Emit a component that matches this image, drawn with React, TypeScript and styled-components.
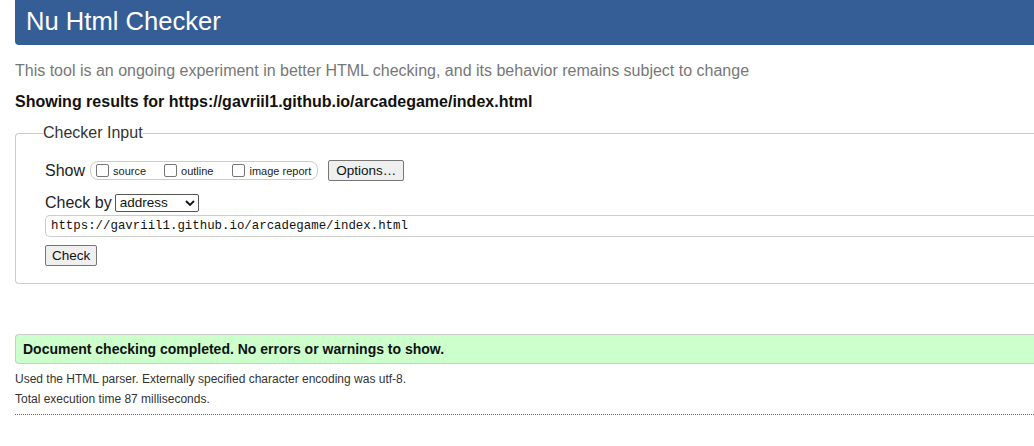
import React from "react";
import styled, { createGlobalStyle } from "styled-components";

const Global = createGlobalStyle`
  html, body { margin: 0; padding: 0; background: #fff; overflow: hidden; }
  body { font-family: "Liberation Sans", Arial, sans-serif; color: #222; }
`;

const Page = styled.div`
  width: 100%;
  box-sizing: border-box;
  padding-left: 15px;
`;

const Header = styled.h1`
  margin: 0;
  height: 45px;
  box-sizing: border-box;
  padding: 7px 11px 0;
  background: #365e96;
  color: #fff;
  font-size: 25.6px;
  line-height: 29px;
  font-weight: normal;
  border-radius: 0 0 0 4px;
`;

const Tagline = styled.p`
  margin: 17px 0 0;
  font-size: 16px;
  line-height: 18px;
  color: #777;
`;

const Results = styled.p`
  margin: 13px 0 0;
  font-size: 16px;
  line-height: 18px;
  font-weight: bold;
  color: #111;
`;

const Fieldset = styled.fieldset`
  margin: 13px 0 0;
  padding: 18px 0 17px 29px;
  border: 1px solid #ccc;
  border-right: 0;
  border-radius: 4px 0 0 4px;
  display: flex;
  flex-direction: column;
`;

const Legend = styled.legend`
  padding: 0;
  margin-left: -2px;
  font-size: 16px;
  line-height: 18px;
  color: #333;
`;

const Row = styled.div<{ $mt?: number }>`
  display: flex;
  align-items: center;
  margin-top: ${(p) => p.$mt ?? 0}px;
`;

const Label = styled.span<{ $gap: number }>`
  font-size: 16px;
  line-height: 18px;
  color: #222;
  margin-right: ${(p) => p.$gap}px;
`;

const Group = styled.div`
  display: flex;
  align-items: center;
  height: 19px;
  box-sizing: border-box;
  border: 1px solid #ccc;
  border-radius: 8px;
  padding: 0 6px 0 5px;
`;

const Option = styled.label<{ $mr: number }>`
  display: flex;
  align-items: center;
  font-size: 11px;
  line-height: 13px;
  color: #222;
  margin-right: ${(p) => p.$mr}px;
  padding-top: 2px;
`;

const Box = styled.input`
  appearance: none;
  width: 13px;
  height: 13px;
  margin: -2px 4px 0 0;
  border: 1px solid #767676;
  border-radius: 2px;
  background: #fff;
  box-sizing: border-box;
`;

const Button = styled.button<{ $ml?: number; $px?: number }>`
  height: 21px;
  padding: 0 ${(p) => p.$px ?? 6}px;
  margin-left: ${(p) => p.$ml ?? 0}px;
  font-family: "Liberation Sans", Arial, sans-serif;
  font-size: 13.5px;
  color: #111;
  background: #efefef;
  border: 1px solid #767676;
  border-radius: 2px;
`;

const SelectWrap = styled.span`
  position: relative;
  display: inline-flex;
`;

const Select = styled.select`
  appearance: none;
  width: 84px;
  height: 18px;
  box-sizing: border-box;
  padding: 0 0 0 4px;
  font-family: "Liberation Sans", Arial, sans-serif;
  font-size: 13.5px;
  line-height: 16px;
  color: #111;
  background: #fff;
  border: 1px solid #555;
  border-radius: 2px;
`;

const Chevron = styled.svg`
  position: absolute;
  right: 4px;
  top: 6px;
  pointer-events: none;
`;

const UrlInput = styled.input`
  display: block;
  width: 100%;
  height: 22px;
  box-sizing: border-box;
  margin-top: 3px;
  padding: 0 5px;
  font-family: "Liberation Mono", "Courier New", monospace;
  font-size: 12.4px;
  color: #111;
  border: 1px solid #ccc;
  border-right: 0;
  border-radius: 5px 0 0 5px;
  outline: none;
`;

const Success = styled.div`
  margin-top: 50px;
  height: 30px;
  box-sizing: border-box;
  padding: 0 7px;
  display: flex;
  align-items: center;
  background: #ccffcc;
  border: 1px solid #ccc;
  border-right: 0;
  border-radius: 4px 0 0 4px;
  font-size: 14px;
  font-weight: bold;
  color: #111;
`;

const Note = styled.p<{ $mt: number }>`
  margin: ${(p) => p.$mt}px 0 0;
  font-size: 12px;
  line-height: 14px;
  color: #333;
`;

const Divider = styled.hr`
  margin: 8px 0 0;
  border: 0;
  border-top: 1px dotted #666;
  height: 0;
`;

export default function App() {
  return (
    <Page>
      <Global />
      <Header>Nu Html Checker</Header>
      <Tagline>
        This tool is an ongoing experiment in better HTML checking, and its behavior remains subject to change
      </Tagline>
      <Results>Showing results for https://gavriil1.github.io/arcadegame/index.html</Results>
      <Fieldset>
        <Legend>Checker Input</Legend>
        <Row>
          <Label $gap={5}>Show</Label>
          <Group>
            <Option $mr={18}>
              <Box type="checkbox" />
              source
            </Option>
            <Option $mr={19}>
              <Box type="checkbox" />
              outline
            </Option>
            <Option $mr={0}>
              <Box type="checkbox" />
              image report
            </Option>
          </Group>
          <Button $ml={10} $px={7}>Options…</Button>
        </Row>
        <Row $mt={13}>
          <Label $gap={3}>Check by</Label>
          <SelectWrap>
            <Select defaultValue="address">
              <option value="address">address</option>
              <option value="file">file upload</option>
              <option value="text">text input</option>
            </Select>
            <Chevron width="10" height="6" viewBox="0 0 10 6">
              <path d="M1 1 L5 5 L9 1" fill="none" stroke="#111" strokeWidth="1.8" />
            </Chevron>
          </SelectWrap>
        </Row>
        <UrlInput defaultValue="https://gavriil1.github.io/arcadegame/index.html" />
        <Row $mt={8}>
          <Button>Check</Button>
        </Row>
      </Fieldset>
      <Success>Document checking completed. No errors or warnings to show.</Success>
      <Note $mt={8}>Used the HTML parser. Externally specified character encoding was utf-8.</Note>
      <Note $mt={6}>Total execution time 87 milliseconds.</Note>
      <Divider />
    </Page>
  );
}
